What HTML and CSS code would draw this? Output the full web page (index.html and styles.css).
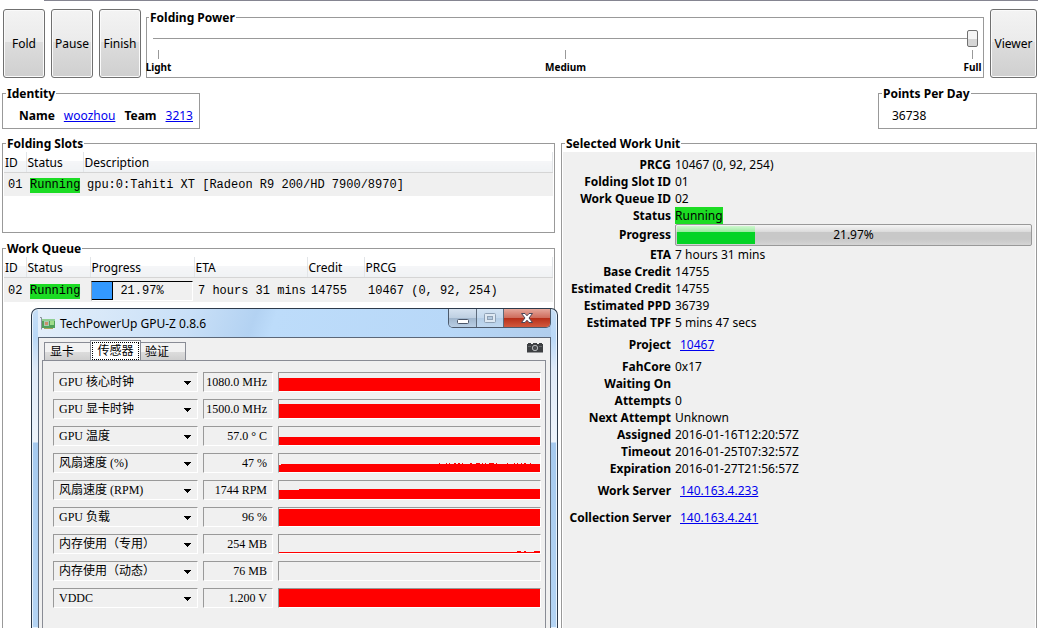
FILE: index.html
```
<!DOCTYPE html>
<html lang="en">
<head>
<meta charset="utf-8">
<title>Folding control</title>
<link rel="stylesheet" href="styles.css">
</head>
<body>
<div class="rule"></div>
<main class="app">
  <div class="toolbar">
    <div class="tools">
      <button class="tool" type="button">Fold</button>
      <button class="tool" type="button">Pause</button>
      <button class="tool" type="button">Finish</button>
    </div>
    <fieldset class="group power">
      <legend><label for="power">Folding Power</label></legend>
      <input class="slider" id="power" type="range" min="0" max="2" value="2">
      <div class="ticks">
        <span class="tick">Light</span>
        <span class="tick">Medium</span>
        <span class="tick">Full</span>
      </div>
    </fieldset>
    <button class="tool viewer" type="button">Viewer</button>
  </div>

  <div class="summary">
    <fieldset class="group identity">
      <legend>Identity</legend>
      <div class="line">
        <b>Name</b><a href="#">woozhou</a><b>Team</b><a href="#">3213</a>
      </div>
    </fieldset>
    <fieldset class="group points">
      <legend>Points Per Day</legend>
      <div class="line">36738</div>
    </fieldset>
  </div>

  <div class="columns">
    <div class="left">
      <fieldset class="group slots">
        <legend>Folding Slots</legend>
        <table class="list">
          <colgroup><col class="c-id"><col class="c-slot-status"><col></colgroup>
          <thead><tr><th>ID</th><th>Status</th><th>Description</th></tr></thead>
          <tbody><tr><td>01</td><td><span class="running">Running</span></td><td>gpu:0:Tahiti XT [Radeon R9 200/HD 7900/8970]</td></tr></tbody>
        </table>
      </fieldset>
      <fieldset class="group queue">
        <legend>Work Queue</legend>
        <table class="list">
          <colgroup><col class="c-id"><col class="c-status"><col class="c-progress"><col class="c-eta"><col class="c-credit"><col></colgroup>
          <thead><tr><th>ID</th><th>Status</th><th>Progress</th><th>ETA</th><th>Credit</th><th>PRCG</th></tr></thead>
          <tbody><tr><td>02</td><td><span class="running">Running</span></td><td class="meter-cell"><div class="meter"><span class="meter-fill"></span><span class="meter-text">21.97%</span></div></td><td>7 hours 31 mins</td><td>14755</td><td>10467 (0, 92, 254)</td></tr></tbody>
        </table>
      </fieldset>
    </div>

    <fieldset class="group unit">
      <legend>Selected Work Unit</legend>
      <dl class="details">
        <dt>PRCG</dt><dd>10467 (0, 92, 254)</dd>
        <dt>Folding Slot ID</dt><dd>01</dd>
        <dt>Work Queue ID</dt><dd>02</dd>
        <dt>Status</dt><dd><span class="running">Running</span></dd>
        <dt class="bar-row">Progress</dt><dd class="bar-row"><div class="bar"><span class="bar-fill"></span><span class="bar-text">21.97%</span></div></dd>
        <dt>ETA</dt><dd>7 hours 31 mins</dd>
        <dt>Base Credit</dt><dd>14755</dd>
        <dt>Estimated Credit</dt><dd>14755</dd>
        <dt>Estimated PPD</dt><dd>36739</dd>
        <dt>Estimated TPF</dt><dd>5 mins 47 secs</dd>
        <dt class="link-row">Project</dt><dd class="link-row"><a href="#">10467</a></dd>
        <dt>FahCore</dt><dd>0x17</dd>
        <dt>Waiting On</dt><dd></dd>
        <dt>Attempts</dt><dd>0</dd>
        <dt>Next Attempt</dt><dd>Unknown</dd>
        <dt>Assigned</dt><dd>2016-01-16T12:20:57Z</dd>
        <dt>Timeout</dt><dd>2016-01-25T07:32:57Z</dd>
        <dt>Expiration</dt><dd>2016-01-27T21:56:57Z</dd>
        <dt class="link-row">Work Server</dt><dd class="link-row"><a href="#">140.163.4.233</a></dd>
        <dt class="link-row">Collection Server</dt><dd class="link-row"><a href="#">140.163.4.241</a></dd>
      </dl>
    </fieldset>
  </div>
</main>

<section class="window" aria-label="TechPowerUp GPU-Z">
  <header class="titlebar">
    <svg class="app-icon" width="15" height="14" viewBox="0 0 15 14" aria-hidden="true">
      <path d="M0 1.500H1.500V13.500" fill="none" stroke="#8a9299"/>
      <rect x="2" y="3" width="13" height="9" fill="#4fa05a"/>
      <rect x="2" y="3" width="13" height="2" fill="#8fcf93"/>
      <rect x="4" y="5" width="5" height="5" fill="#a9c9b4"/>
      <rect x="5" y="6" width="3" height="3" fill="#c98f6a"/>
      <rect x="10" y="5" width="4" height="4" fill="#9fdc8a"/>
      <rect x="4" y="12" width="9" height="1" fill="#a8a35a"/>
    </svg>
    <h1 class="title">TechPowerUp GPU-Z 0.8.6</h1>
    <div class="caption">
      <button class="cap min" type="button" aria-label="Minimize"><svg width="14" height="8" viewBox="0 0 14 8"><rect x="1.500" y="2.500" width="11" height="4" rx="1" fill="#fff" stroke="#4a5568"/></svg></button>
      <button class="cap max" type="button" aria-label="Maximize"><svg width="12" height="10" viewBox="0 0 12 10"><rect x="0.500" y="0.500" width="11" height="9" rx="1" fill="#dfe9f3" stroke="#8fa1b5"/><rect x="3.500" y="3.500" width="5" height="3" fill="#b3c9df" stroke="#8fa1b5"/></svg></button>
      <button class="cap close" type="button" aria-label="Close"><svg width="12" height="10" viewBox="0 0 12 10"><path d="M0.500 0.500H4L6 2.800 8 0.500H11.500L8 5 11.500 9.500H8L6 7.200 4 9.500H0.500L4 5Z" fill="#fff" stroke="#4a4658"/></svg></button>
    </div>
  </header>
  <div class="client">
    <div class="tabrow" lang="zh-CN">
      <div class="tabs">
        <button class="tab t-card" type="button">显卡</button>
        <button class="tab t-sensors selected" type="button"><span class="focus">传感器</span></button>
        <button class="tab t-validate" type="button">验证</button>
      </div>
      <button class="camera" type="button" aria-label="Screenshot"><svg width="16" height="10" viewBox="0 0 16 10"><path d="M0 1H1V0H4V1H6V0H10V1H12V0H15V1H16V9.500H0Z" fill="#3d3f42"/><circle cx="8" cy="5" r="2.700" fill="#4b4d50" stroke="#b4b6b8"/><path d="M1 3.500H4M12 3.500H15" stroke="#66696c"/></svg></button>
    </div>
    <div class="panel" lang="zh-CN">
      <div class="sensor"><select aria-label="Sensor 1"><option>GPU 核心时钟</option></select><output>1080.0 MHz</output><svg class="graph" viewBox="0 0 261 18" preserveAspectRatio="none"><path d="M0 5H261V18H0Z"/></svg></div>
      <div class="sensor"><select aria-label="Sensor 2"><option>GPU 显卡时钟</option></select><output>1500.0 MHz</output><svg class="graph" viewBox="0 0 261 18" preserveAspectRatio="none"><path d="M0 4H261V18H0Z"/></svg></div>
      <div class="sensor"><select aria-label="Sensor 3"><option>GPU 温度</option></select><output>57.0 ° C</output><svg class="graph" viewBox="0 0 261 18" preserveAspectRatio="none"><path d="M0 10H261V18H0Z"/></svg></div>
      <div class="sensor"><select aria-label="Sensor 4"><option>风扇速度 (%)</option></select><output>47 %</output><svg class="graph" viewBox="0 0 261 18" preserveAspectRatio="none"><path d="M0 11H2V10H261V18H0ZM160 9h1v1h-1zM167 9h1v1h-1zM170 9h1v1h-1zM175 9h2v1h-2zM179 9h2v1h-2zM183 9h1v1h-1zM191 9h2v1h-2zM197 9h4v1h-4zM203 9h1v1h-1zM206 9h1v1h-1zM210 9h5v1h-5zM217 9h1v1h-1zM228 9h1v1h-1zM235 9h1v1h-1zM238 9h1v1h-1zM242 9h1v1h-1zM245 9h2v1h-2zM251 9h1v1h-1z"/></svg></div>
      <div class="sensor"><select aria-label="Sensor 5"><option>风扇速度 (RPM)</option></select><output>1744 RPM</output><svg class="graph" viewBox="0 0 261 18" preserveAspectRatio="none"><path d="M0 9H20V8H261V18H0Z"/></svg></div>
      <div class="sensor"><select aria-label="Sensor 6"><option>GPU 负载</option></select><output>96 %</output><svg class="graph" viewBox="0 0 261 18" preserveAspectRatio="none"><path d="M0 1H261V18H0Z"/></svg></div>
      <div class="sensor"><select aria-label="Sensor 7"><option>内存使用（专用）</option></select><output>254 MB</output><svg class="graph" viewBox="0 0 261 18" preserveAspectRatio="none"><path d="M0 17H238V16H242V17H245V16H247V17H255V16H261V18H0Z"/></svg></div>
      <div class="sensor"><select aria-label="Sensor 8"><option>内存使用（动态）</option></select><output>76 MB</output><svg class="graph" viewBox="0 0 261 18" preserveAspectRatio="none"></svg></div>
      <div class="sensor"><select aria-label="Sensor 9"><option>VDDC</option></select><output>1.200 V</output><svg class="graph" viewBox="0 0 261 18" preserveAspectRatio="none"><path d="M0 0H261V18H0Z"/></svg></div>
    </div>
  </div>
</section>
</body>
</html>
```
FILE: styles.css
```
* { box-sizing: border-box; }

html, body { height: 100%; }

body {
  margin: 0;
  display: flex;
  flex-direction: column;
  overflow: hidden;
  background: #fff;
  color: #000;
  font: 12px/17px "Noto Sans", "Open Sans", "Noto Sans CJK SC", sans-serif;
}

button, input, select, output { font: inherit; color: inherit; }

a { color: #00e; }

.rule { height: 1px; margin-left: 44px; background: #858591; flex: none; }

.app {
  flex: 1;
  display: flex;
  flex-direction: column;
  gap: 7px;
  padding: 8px 1px 0 2px;
  min-height: 0;
}

/* Group boxes */
.group {
  margin: 0;
  padding: 0 1px;
  border: 1px solid #999;
  min-width: 0;
}

.group legend {
  margin-left: 2px;
  padding: 0 1px;
  font-weight: bold;
}

/* Toolbar */
.toolbar { display: flex; padding-left: 1px; }

.tools { display: flex; gap: 6px; margin-right: 5px; }

.tool {
  width: 42px;
  padding: 0;
  border: 1px solid #707070;
  border-radius: 3px;
  background: linear-gradient(#f3f3f3, #ebebeb 47%, #ddd 48%, #cfcfcf);
  box-shadow: inset 0 0 0 1px #fafafa;
}

.viewer { width: 47px; margin-left: 6px; }

.power { flex: 1; height: 69px; padding: 0; }

.slider {
  display: block;
  appearance: none;
  width: calc(100% - 11px);
  height: 17px;
  margin: 4px 5px 3px 6px;
  background: none;
}

.slider::-webkit-slider-runnable-track { height: 1px; background: #999; }

.slider::-webkit-slider-thumb {
  appearance: none;
  width: 11px;
  height: 17px;
  margin-top: -8px;
  border: 1px solid #707070;
  border-radius: 2px;
  background: linear-gradient(#f5f5f5 50%, #d6d6d6 51%);
}

.ticks { display: flex; justify-content: space-between; padding: 0 10px 0 11px; }

.tick {
  display: flex;
  flex-direction: column;
  align-items: center;
  width: 1px;
  font-size: 10px;
  line-height: 17px;
  font-weight: bold;
  white-space: nowrap;
}

.tick::before { content: ""; width: 1px; height: 9px; background: #999; flex: none; }

/* Identity and points */
.summary { display: flex; justify-content: space-between; }

.line { display: flex; align-items: center; gap: 9px; height: 26px; }

.summary { margin-bottom: -1px; }

.identity .line { padding: 0 5px 0 15px; }

.points { width: 159px; }

.points .line { padding-left: 12px; }

/* Lists */
.columns {
  flex: 1;
  display: grid;
  grid-template-columns: 553fr 476fr;
  gap: 6px;
  min-height: 0;
}

.left { display: flex; flex-direction: column; gap: 7px; min-width: 0; }

.slots { height: 98px; }

.queue { flex: 1; border-bottom: 0; }

.list { width: 100%; border-collapse: collapse; table-layout: fixed; }

.list th {
  height: 20px;
  padding: 1px 0 0 1px;
  border-right: 1px solid #e2e5e8;
  border-bottom: 1px solid #d5d5d5;
  background: linear-gradient(#fff 45%, #f5f6f8 46%, #f0f2f4);
  text-align: left;
  font-weight: normal;
}

.list td {
  height: 24px;
  padding: 3px 0 0 4px;
  background: #f0f0f0;
  font: 12px/15px "Liberation Mono", monospace;
  white-space: nowrap;
}

.c-id { width: 22px; }
.c-slot-status { width: 57px; }
.c-status { width: 64px; }
.c-progress { width: 104px; }
.c-eta { width: 113px; }
.c-credit { width: 57px; }

.running { display: inline-block; background: #1cdc24; }

.list .meter-cell { padding: 3px 1px 1px; }

.meter {
  display: flex;
  position: relative;
  height: 20px;
  border: 1px solid #fff;
  border-top-color: #000;
  border-left-color: #999;
}

.meter-fill {
  width: 21px;
  border-right: 1px solid #000;
  border-bottom: 1px solid #000;
  background: #3399ff;
}

.meter-text { position: absolute; inset: 2px 0 0; text-align: center; }

/* Work unit */
.unit { border-bottom: 0; }

.details {
  display: grid;
  grid-template-columns: 108px 1fr;
  column-gap: 4px;
  align-content: start;
  height: 100%;
  margin: 0;
  padding-top: 4px;
  background: #f0f0f0;
}

.details dt { font-weight: bold; text-align: right; white-space: nowrap; }

.details dd { margin: 0; }

.details .bar-row { line-height: 22px; }

.details .link-row { line-height: 27px; }

dd.bar-row { padding-right: 3px; }

dd.link-row { padding-left: 5px; }

.bar {
  display: flex;
  position: relative;
  height: 22px;
  padding: 1px;
  border: 1px solid #999;
  border-radius: 2px;
  background: linear-gradient(#f5f5f5, #dcdcdc 33%, #c8c8c8 34%, #c8c8c8 70%, #d5d5d5);
}

.bar-fill { width: 22%; background: linear-gradient(#d0f8d0, #9aeb9f 33%, #04d325 34%); }

.bar-text { position: absolute; inset: 0; line-height: 19px; text-align: center; }

/* GPU-Z window, floating over the lists */
.window {
  position: absolute;
  left: 31px;
  top: 308px;
  bottom: 0;
  width: 527px;
  display: flex;
  flex-direction: column;
  padding: 0 6px;
  border: 1px solid #2c3a4b;
  border-bottom: 0;
  border-radius: 7px 7px 0 0;
  background: linear-gradient(#c6def6 0, #b9d8f7 28px, #dfeaf7 60px, #eef4fb 133px, #a6caef 134px, #b4d4f4);
  box-shadow: inset 0 0 0 1px #e8f3fd;
}

.titlebar {
  display: flex;
  align-items: center;
  gap: 5px;
  height: 28px;
  padding-left: 2px;
  flex: none;
  background: linear-gradient(110deg, #e4effa 0, #c8dff7 30%, #b3d2f2 42%, #bddcfa 46%, #b8d8f8 80%, #b0cdec);
}

.title { margin: 0; font-size: 12px; font-weight: normal; }

.caption {
  display: flex;
  align-self: flex-start;
  margin-left: auto;
  border: 1px solid #4c5a6c;
  border-top: 0;
  border-radius: 0 0 5px 5px;
  overflow: hidden;
}

.cap {
  display: flex;
  align-items: center;
  justify-content: center;
  height: 18px;
  padding: 0;
  border: 0;
  background: linear-gradient(#d5e2f0, #bfd0e2 48%, #9fb5cc 50%, #b9cee4);
}

.cap + .cap { border-left: 1px solid #5d6b7c; }

.min { width: 27px; padding-top: 5px; }
.max { width: 27px; background: linear-gradient(#d3e3f3, #c3d8ed 50%, #b4cde6 51%, #c0d8f0); }
.close { width: 47px; background: linear-gradient(#e5a79b, #cf6e5d 48%, #b62e18 50%, #d2593d); }

.client {
  flex: 1;
  display: flex;
  flex-direction: column;
  padding: 2px 4px 0 3px;
  border: 1px solid #5b6778;
  border-bottom: 0;
  background: #f0f0f0;
}

.tabrow { display: flex; justify-content: space-between; align-items: flex-start; }

.tabs { display: flex; align-items: flex-end; padding-left: 2px; }

.tab {
  height: 18px;
  padding: 1px 0 0 5px;
  border: 1px solid #898c95;
  border-bottom: 0;
  background: linear-gradient(#f2f2f2 50%, #ddd 51%, #cfcfcf);
  line-height: 16px;
  text-align: left;
}

.t-card { width: 46px; border-right: 0; }
.t-validate { width: 45px; border-left: 0; padding-left: 4px; }

.tab.selected {
  width: 51px;
  height: 20px;
  padding: 1px 1px 0;
  background: #fff;
  text-align: center;
}

.focus { display: block; height: 18px; border: 1px dotted #000; line-height: 15px; }

.camera { display: flex; padding: 0; margin: 3px 3px 0 0; border: 0; background: none; }

.panel {
  flex: 1;
  display: flex;
  flex-direction: column;
  gap: 7px;
  padding: 11px 4px 0 10px;
  border: 1px solid #898c95;
  border-bottom: 0;
  font-family: "Liberation Serif", "Noto Sans CJK SC", serif;
}

.sensor { display: flex; gap: 5px; height: 20px; }

.sensor select, .sensor output, .graph {
  border: 1px solid #fff;
  border-top-color: #999;
  border-left-color: #999;
}

.sensor select {
  appearance: none;
  width: 145px;
  padding: 0 0 0 5px;
  border-radius: 0;
  background: linear-gradient(#000, #000) 130px 8px / 7px 1px no-repeat,
    linear-gradient(#000, #000) 131px 9px / 5px 1px no-repeat,
    linear-gradient(#000, #000) 132px 10px / 3px 1px no-repeat,
    linear-gradient(#000, #000) 133px 11px / 1px 1px no-repeat,
    #f0f0f0;
}

.sensor output { width: 70px; padding-right: 5px; line-height: 18px; text-align: right; }

.graph { flex: 1; min-width: 0; height: 20px; fill: #f00; }
```
